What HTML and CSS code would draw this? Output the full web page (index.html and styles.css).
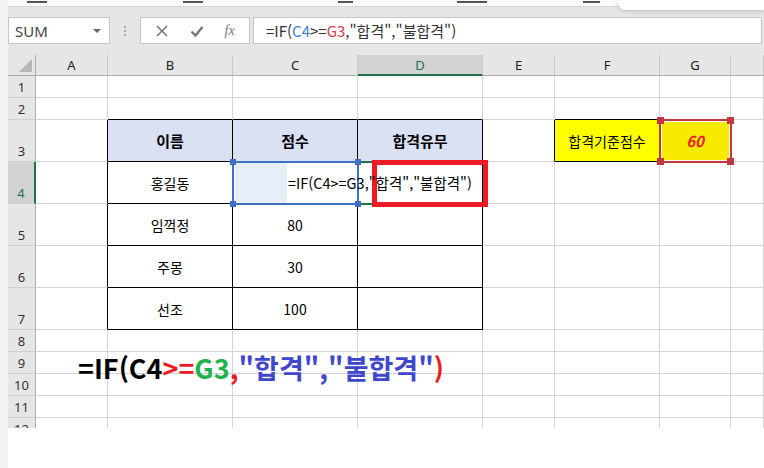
FILE: index.html
```html
<!DOCTYPE html>
<html lang="ko">
<head>
    <meta charset="UTF-8">
    <title>IF 함수 - 합격 여부</title>
    <link rel="stylesheet" href="styles.css">
</head>
<body>
<div class="app">
    <div class="edge"></div>
    <div class="excel">
        <div class="ribbon-tail">
            <span class="tick t1"></span>
            <span class="tick t2"></span>
            <span class="tick t3"></span>
            <span class="tick t4"></span>
            <span class="tick t5"></span>
        </div>

        <div class="toolbar">
            <div class="namebox"><span>SUM</span><span class="caret"></span></div>
            <div class="grip"><i></i><i></i><i></i></div>
            <div class="fbtns">
                <svg width="14" height="14" viewBox="0 0 14 14"><path d="M2 2 L12 12 M12 2 L2 12" stroke="#777" stroke-width="1.6" fill="none"/></svg>
                <svg width="14" height="14" viewBox="0 0 14 14"><path d="M1.5 7.5 L5.5 11.5 L12.5 3" stroke="#777" stroke-width="2.4" fill="none"/></svg>
                <span class="fx">fx</span>
            </div>
            <div class="fbar">=IF(<span class="ref-c">C4</span>&gt;=<span class="ref-g">G3</span>,"합격","불합격")</div>
        </div>

        <div class="sheet">
            <div class="row hdr">
                <div class="ch corner"><span class="tri"></span></div>
                <div class="ch">A</div>
                <div class="ch">B</div>
                <div class="ch">C</div>
                <div class="ch on">D</div>
                <div class="ch">E</div>
                <div class="ch">F</div>
                <div class="ch">G</div>
                <div class="ch"></div>
            </div>
            <div class="row">
                <div class="rh">1</div>
                <div class="cell"></div><div class="cell"></div><div class="cell"></div><div class="cell"></div>
                <div class="cell"></div><div class="cell"></div><div class="cell"></div><div class="cell"></div>
            </div>
            <div class="row">
                <div class="rh">2</div>
                <div class="cell"></div>
                <div class="cell bk-b"></div><div class="cell bk-b"></div><div class="cell bk-b"></div>
                <div class="cell"></div>
                <div class="cell bk-b"></div>
                <div class="cell"></div><div class="cell"></div>
            </div>
            <div class="row tall">
                <div class="rh">3</div>
                <div class="cell bk-r"></div>
                <div class="cell th bk-r bk-b">이름</div>
                <div class="cell th bk-r bk-b">점수</div>
                <div class="cell th bk-r bk-b">합격유무</div>
                <div class="cell bk-r"></div>
                <div class="cell yel bk-r bk-b">합격기준점수</div>
                <div class="cell gold">60</div>
                <div class="cell"></div>
            </div>
            <div class="row tall">
                <div class="rh on">4</div>
                <div class="cell bk-r"></div>
                <div class="cell bk-r bk-b">홍길동</div>
                <div class="cell bk-r bk-b"></div>
                <div class="cell bk-r bk-b"></div>
                <div class="cell"></div><div class="cell"></div><div class="cell"></div><div class="cell"></div>
            </div>
            <div class="row tall">
                <div class="rh">5</div>
                <div class="cell bk-r"></div>
                <div class="cell bk-r bk-b">임꺽정</div>
                <div class="cell bk-r bk-b">80</div>
                <div class="cell bk-r bk-b"></div>
                <div class="cell"></div><div class="cell"></div><div class="cell"></div><div class="cell"></div>
            </div>
            <div class="row tall">
                <div class="rh">6</div>
                <div class="cell bk-r"></div>
                <div class="cell bk-r bk-b">주몽</div>
                <div class="cell bk-r bk-b">30</div>
                <div class="cell bk-r bk-b"></div>
                <div class="cell"></div><div class="cell"></div><div class="cell"></div><div class="cell"></div>
            </div>
            <div class="row tall">
                <div class="rh">7</div>
                <div class="cell bk-r"></div>
                <div class="cell bk-r bk-b">선조</div>
                <div class="cell bk-r bk-b">100</div>
                <div class="cell bk-r bk-b"></div>
                <div class="cell"></div><div class="cell"></div><div class="cell"></div><div class="cell"></div>
            </div>
            <div class="row">
                <div class="rh">8</div>
                <div class="cell"></div><div class="cell"></div><div class="cell"></div><div class="cell"></div>
                <div class="cell"></div><div class="cell"></div><div class="cell"></div><div class="cell"></div>
            </div>
            <div class="row">
                <div class="rh">9</div>
                <div class="cell"></div><div class="cell"></div><div class="cell"></div><div class="cell"></div>
                <div class="cell"></div><div class="cell"></div><div class="cell"></div><div class="cell"></div>
            </div>
            <div class="row">
                <div class="rh">10</div>
                <div class="cell"></div><div class="cell"></div><div class="cell"></div><div class="cell"></div>
                <div class="cell"></div><div class="cell"></div><div class="cell"></div><div class="cell"></div>
            </div>
            <div class="row">
                <div class="rh">11</div>
                <div class="cell"></div><div class="cell"></div><div class="cell"></div><div class="cell"></div>
                <div class="cell"></div><div class="cell"></div><div class="cell"></div><div class="cell"></div>
            </div>
            <div class="row">
                <div class="rh">12</div>
                <div class="cell"></div><div class="cell"></div><div class="cell"></div><div class="cell"></div>
                <div class="cell"></div><div class="cell"></div><div class="cell"></div><div class="cell"></div>
            </div>

            <!-- editing overlays -->
            <div class="c4-fill"></div>
            <div class="d4-active"></div>
            <div class="sel-c4">
                <span class="h tl"></span><span class="h tr"></span>
                <span class="h bl"></span><span class="h br"></span>
            </div>
            <div class="sel-g3">
                <span class="h tl"></span><span class="h tr"></span>
                <span class="h bl"></span><span class="h br"></span>
            </div>
            <div class="red-box"></div>
            <div class="c4-text">=IF(C4&gt;=G3,"합격","불합격")</div>
            <div class="big-formula">=IF(C4<span class="op">&gt;=</span><span class="g">G3</span><span class="op">,</span><span class="str">"합격","불합격"</span><span class="op">)</span></div>
        </div>
    </div>
    <div class="popup"></div>
</div>
</body>
</html>
```

FILE: styles.css
```css
* { box-sizing: border-box; }
body {
    margin: 0;
    background: #fff;
    font-family: "Noto Sans CJK KR", "Noto Sans", sans-serif;
    overflow: hidden;
}
.app {
    display: flex;
    height: 468px;
    position: relative;
}
.edge {
    width: 8px;
    background: #f3f3f3;
}
.excel {
    flex: 1;
    display: flex;
    flex-direction: column;
}

/* cut-off ribbon */
.ribbon-tail {
    height: 7px;
    background: #fafafa;
    border-bottom: 1px solid #d6d6d6;
    display: flex;
    align-items: flex-start;
    padding-top: 1px;
}
.tick { height: 2px; background: #555; }
.t1 { margin-left: 19px; width: 20px; }
.t2 { margin-left: 136px; width: 20px; }
.t3 { margin-left: 135px; width: 15px; }
.t4 { margin-left: 104px; width: 30px; }
.t5 { margin-left: 96px; width: 17px; }

/* formula bar row */
.toolbar {
    height: 48px;
    background: #e6e6e6;
    display: flex;
    align-items: flex-start;
    padding-top: 10px;
}
.namebox {
    width: 102px;
    height: 27px;
    background: #fff;
    border: 1px solid #c6c6c6;
    display: flex;
    align-items: center;
    justify-content: space-between;
    padding: 0 8px 0 6px;
    font-family: "Noto Sans", sans-serif;
    font-size: 15px;
    color: #444;
}
.caret {
    width: 0;
    height: 0;
    border-left: 4px solid transparent;
    border-right: 4px solid transparent;
    border-top: 4px solid #666;
}
.grip {
    width: 30px;
    height: 27px;
    display: flex;
    flex-direction: column;
    align-items: center;
    justify-content: center;
    gap: 2px;
}
.grip i {
    width: 2px;
    height: 2px;
    background: #a8a8a8;
}
.fbtns {
    width: 110px;
    height: 27px;
    background: #fff;
    border: 1px solid #c6c6c6;
    display: flex;
    align-items: center;
    justify-content: space-around;
    padding: 0 4px;
}
.fx {
    font-family: "Liberation Serif", serif;
    font-style: italic;
    font-size: 14px;
    color: #777;
}
.fbar {
    flex: 1;
    height: 27px;
    margin: 0 2px 0 3px;
    background: #fff;
    border: 1px solid #c6c6c6;
    padding-left: 12px;
    font-size: 15px;
    line-height: 25px;
    color: #333;
}
.ref-c { color: #3b7fd9; }
.ref-g { color: #dc3b45; }

/* grid */
.sheet {
    position: relative;
    height: 373px;
    overflow: hidden;
    font-size: 14px;
    color: #000;
}
.row {
    display: grid;
    grid-template-columns: 28px 72px 125px 125px 125px 72px 105px 71px 1fr;
    height: 22px;
}
.row.hdr { height: 21px; }
.row.tall { height: 42px; }
.cell {
    border-right: 1px solid #d4d4d4;
    border-bottom: 1px solid #d4d4d4;
    display: flex;
    align-items: center;
    justify-content: center;
}
.ch {
    background: #e6e6e6;
    border-right: 1px solid #c9c9c9;
    border-bottom: 1px solid #ababab;
    display: flex;
    align-items: center;
    justify-content: center;
    font-family: "Noto Sans", sans-serif;
    font-size: 13px;
    color: #222;
}
.ch.on {
    background: #d2d2d2;
    color: #217346;
    border-bottom: 2px solid #217346;
}
.corner {
    justify-content: flex-end;
    align-items: flex-end;
    padding: 0 3px 3px 0;
    border-right-color: #ababab;
}
.tri {
    width: 0;
    height: 0;
    border-left: 13px solid transparent;
    border-bottom: 13px solid #b8b8b8;
}
.rh {
    background: #e6e6e6;
    border-right: 1px solid #ababab;
    border-bottom: 1px solid #cfcfcf;
    display: flex;
    align-items: center;
    justify-content: center;
    font-family: "Noto Sans", sans-serif;
    font-size: 13px;
    color: #333;
}
.tall .rh {
    align-items: flex-end;
    padding-bottom: 1px;
}
.rh.on {
    background: #d2d2d2;
    color: #217346;
    border-right: 2px solid #217346;
}
.bk-r { border-right-color: #000; }
.bk-b { border-bottom-color: #000; }
.th {
    background: #d9e1f2;
    font-weight: bold;
    font-size: 15px;
}
.yel { background: #ffff00; }
.gold {
    background: #f8ea00;
    color: #ee1c25;
    font-weight: bold;
    font-style: italic;
    font-size: 15px;
}

/* overlays on the sheet */
.c4-fill {
    position: absolute;
    left: 227px;
    top: 108px;
    width: 52px;
    height: 40px;
    background: #e8eef9;
}
.d4-active {
    position: absolute;
    left: 350px;
    top: 106px;
    width: 127px;
    height: 44px;
    border-top: 2px solid #217346;
    border-bottom: 2px solid #217346;
}
.sel-c4, .sel-g3 {
    position: absolute;
    border: 2px solid #3d70c6;
}
.sel-c4 {
    left: 224px;
    top: 106px;
    width: 127px;
    height: 44px;
}
.sel-g3 {
    left: 651px;
    top: 64px;
    width: 73px;
    height: 44px;
    border-color: #c4373f;
    box-shadow: inset 0 0 0 1px #fff;
}
.h {
    position: absolute;
    width: 6px;
    height: 6px;
    background: #3d70c6;
}
.sel-g3 .h {
    width: 7px;
    height: 7px;
    background: #c4373f;
}
.tl { left: -4px; top: -4px; }
.tr { right: -4px; top: -4px; }
.bl { left: -4px; bottom: -4px; }
.br { right: -4px; bottom: -4px; }
.red-box {
    position: absolute;
    left: 364px;
    top: 105px;
    width: 116px;
    height: 47px;
    border: 5px solid #ed1c24;
}
.c4-text {
    position: absolute;
    left: 280px;
    top: 107px;
    height: 42px;
    line-height: 42px;
    font-size: 14.5px;
    white-space: nowrap;
}
.big-formula {
    position: absolute;
    left: 70px;
    top: 298px;
    font-size: 27px;
    line-height: 30px;
    font-weight: bold;
    color: #000;
    white-space: nowrap;
}
.big-formula .op { color: #ed1c24; }
.big-formula .g { color: #22b14c; }
.big-formula .str { color: #3f48cc; }

.popup {
    position: absolute;
    right: 0;
    top: 0;
    width: 146px;
    height: 10px;
    background: #fff;
    border-bottom-left-radius: 8px;
    box-shadow: 0 1px 5px rgba(0,0,0,0.18);
}
```
